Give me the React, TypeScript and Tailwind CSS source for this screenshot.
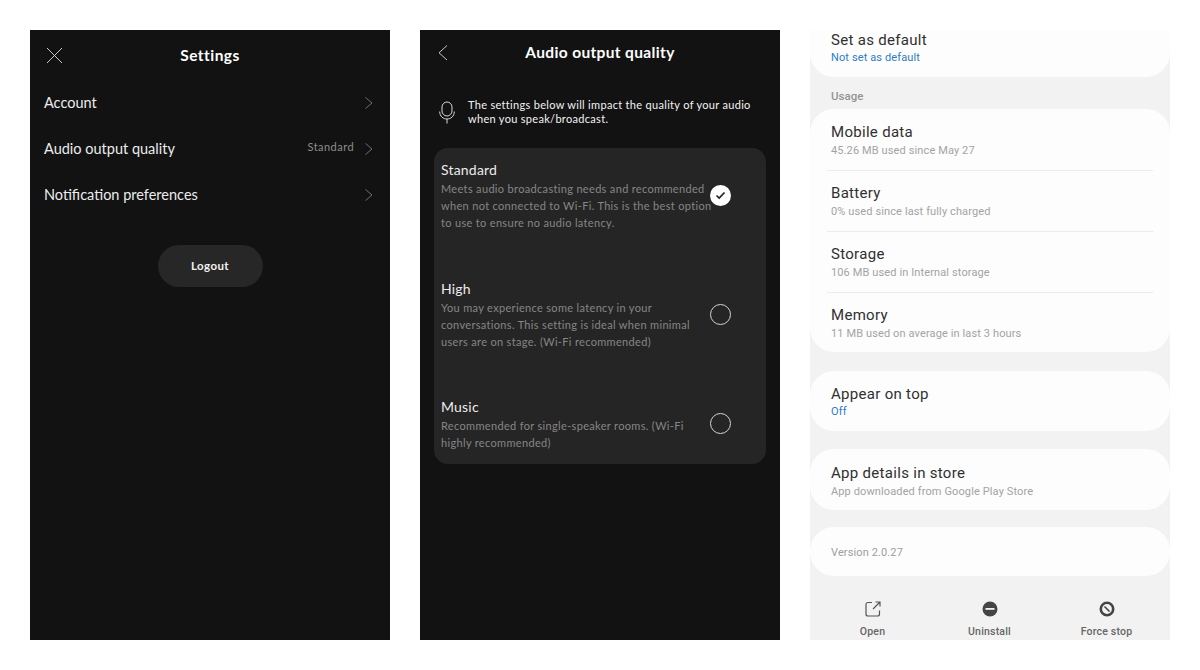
import React from "react";

const spot = "font-['Lato','Noto_Sans',sans-serif]";
const sam = "font-['Roboto','Noto_Sans',sans-serif]";

function Chevron() {
  return (
    <svg width="10" height="14" viewBox="0 0 10 14" fill="none" stroke="#6e6e6e" strokeWidth="1">
      <path d="M1.5 1.5 L8 7 L1.5 12.5" />
    </svg>
  );
}

function SettingsRow({ label, value }: { label: string; value?: string }) {
  return (
    <div className="flex h-[46px] items-center justify-between pl-[14px] pr-[16px]">
      <span className="text-[14.5px] tracking-[0px] text-[#ececec]">{label}</span>
      <div className="flex items-center gap-[10px]">
        {value && <span className="text-[11px] tracking-[0.45px] text-[#8e8e8e] -mt-[3px]">{value}</span>}
        <Chevron />
      </div>
    </div>
  );
}

function SettingsPanel() {
  return (
    <div className={`${spot} h-[610px] w-[360px] shrink-0 bg-[#121212]`}>
      <div className="relative flex h-[50px] items-center justify-center pt-[2px]">
        <svg className="absolute left-[16px] top-[17px]" width="17" height="17" viewBox="0 0 17 17" stroke="#dcdcdc" strokeWidth="0.9" fill="none">
          <path d="M1 1 L16 16 M16 1 L1 16" />
        </svg>
        <span className="text-[15.5px] font-bold tracking-[0.45px] text-white">Settings</span>
      </div>
      <SettingsRow label="Account" />
      <SettingsRow label="Audio output quality" value="Standard" />
      <SettingsRow label="Notification preferences" />
      <div className="mt-[27px] flex justify-center">
        <div className="flex h-[42px] w-[105px] items-center justify-center rounded-full bg-[#272727] text-[11.5px] font-bold tracking-[0.4px] text-[#f2f2f2]">
          Logout
        </div>
      </div>
    </div>
  );
}

function Option({ title, lines, checked, cls }: { title: string; lines: string[]; checked?: boolean; cls: string }) {
  return (
    <div className={`flex items-center ${cls}`}>
      <div className="w-[268px] shrink-0">
        <div className="text-[14px] leading-[18px] tracking-[0.2px] text-[#ececec]">{title}</div>
        <div className="mt-[1px] text-[11px] leading-[17px] tracking-[0.33px] text-[#858585] whitespace-nowrap">
          {lines.map((l) => (
            <div key={l}>{l}</div>
          ))}
        </div>
      </div>
      <div className="mb-[2px] flex h-[22px] w-[22px] items-center justify-center">
        {checked ? (
          <div className="flex h-[21px] w-[21px] items-center justify-center rounded-full bg-white">
            <svg width="11" height="9" viewBox="0 0 11 9" fill="none" stroke="#222" strokeWidth="1.7">
              <path d="M1.5 4.5 L4.2 7 L9.5 1.5" />
            </svg>
          </div>
        ) : (
          <div className="h-[21px] w-[21px] rounded-full border border-[#d4d4d4]" />
        )}
      </div>
    </div>
  );
}

function QualityPanel() {
  return (
    <div className={`${spot} h-[610px] w-[360px] shrink-0 bg-[#121212]`}>
      <div className="relative flex h-[46px] items-center justify-center">
        <svg className="absolute left-[17px] top-[14px]" width="12" height="18" viewBox="0 0 12 18" fill="none" stroke="#dcdcdc" strokeWidth="0.9">
          <path d="M10 1.5 L2 8.8 L10 16" />
        </svg>
        <span className="text-[15.5px] font-bold tracking-[0.35px] text-white">Audio output quality</span>
      </div>
      <div className="mt-[22px] flex items-center pl-[19px]">
        <svg width="16" height="23" viewBox="0 0 16 23" fill="none" stroke="#d8d8d8" strokeWidth="1">
          <rect x="3" y="1" width="10" height="14" rx="5" />
          <path d="M0.7 10.5 C0.7 20.5 15.3 20.5 15.3 10.5 M8 18 V22.5" />
        </svg>
        <div className="ml-[13px] text-[11px] leading-[14px] tracking-[0.31px] text-[#f2f2f2] whitespace-nowrap">
          <div>The settings below will impact the quality of your audio</div>
          <div>when you speak/broadcast.</div>
        </div>
      </div>
      <div className="mx-[14px] mt-[22px] h-[316px] rounded-[14px] bg-[#252525] px-[7px] pt-[14px]">
        <Option
          cls="h-[68px]"
          title="Standard"
          checked
          lines={[
            "Meets audio broadcasting needs and recommended",
            "when not connected to Wi-Fi. This is the best option",
            "to use to ensure no audio latency.",
          ]}
        />
        <Option
          cls="mt-[51px] h-[68px]"
          title="High"
          lines={[
            "You may experience some latency in your",
            "conversations. This setting is ideal when minimal",
            "users are on stage. (Wi-Fi recommended)",
          ]}
        />
        <Option
          cls="mt-[49px] h-[52px]"
          title="Music"
          lines={["Recommended for single-speaker rooms. (Wi-Fi", "highly recommended)"]}
        />
      </div>
    </div>
  );
}

function Item({ title, sub, blue, cls = "", wide }: { title: string; sub: string; blue?: boolean; cls?: string; wide?: boolean }) {
  return (
    <div className={`px-[21px] ${cls}`}>
      <div className="text-[15px] leading-[20px] tracking-[0.3px] text-[#303030]">{title}</div>
      <div
        className={`text-[11px] leading-[15px] tracking-[0.12px] ${wide ? "mt-[1px]" : ""} ${
          blue ? "text-[#2d7cc4]" : "text-[#a3a3a3]"
        }`}
      >
        {sub}
      </div>
    </div>
  );
}

function Divider() {
  return <div className="mx-[17px] mt-[12px] h-[1px] bg-[#ececec]" />;
}

function ActionBtn({ label, icon }: { label: string; icon: React.ReactNode }) {
  return (
    <div className="flex w-[117px] flex-col items-center">
      <div className="flex h-[18px] items-center justify-center">{icon}</div>
      <div className="mt-[7px] text-[10.5px] font-medium leading-[14px] tracking-[0.2px] text-[#666666]">{label}</div>
    </div>
  );
}

function AppInfoPanel() {
  return (
    <div className={`${sam} flex h-[610px] w-[360px] shrink-0 flex-col overflow-hidden bg-[#f2f2f2]`}>
      <div className="h-[47px] rounded-b-[24px] bg-[#fdfdfd]">
        <Item title="Set as default" sub="Not set as default" blue />
      </div>
      <div className="h-[32px] px-[21px] pt-[12px] text-[11.5px] font-medium leading-[15px] text-[#949494]">Usage</div>
      <div className="h-[243px] rounded-[24px] bg-[#fdfdfd] pt-[13px]">
        <Item wide title="Mobile data" sub="45.26 MB used since May 27" />
        <Divider />
        <Item wide cls="mt-[12px]" title="Battery" sub="0% used since last fully charged" />
        <Divider />
        <Item wide cls="mt-[12px]" title="Storage" sub="106 MB used in Internal storage" />
        <Divider />
        <Item wide cls="mt-[12px]" title="Memory" sub="11 MB used on average in last 3 hours" />
      </div>
      <div className="mt-[19px] h-[60px] rounded-[24px] bg-[#fdfdfd] pt-[13px]">
        <Item title="Appear on top" sub="Off" blue />
      </div>
      <div className="mt-[18px] h-[61px] rounded-[24px] bg-[#fdfdfd] pt-[14px]">
        <Item wide title="App details in store" sub="App downloaded from Google Play Store" />
      </div>
      <div className="mt-[17px] flex h-[49px] items-center rounded-[24px] bg-[#fdfdfd] px-[21px] pt-[3px] text-[11px] tracking-[0.12px] text-[#9e9e9e]">
        Version 2.0.27
      </div>
      <div className="mt-[24px] flex pl-[4px]">
        <ActionBtn
          label="Open"
          icon={
            <svg width="16" height="16" viewBox="0 0 16 16" fill="none" stroke="#555" strokeWidth="1.2">
              <path d="M7 1.5 H3 C1.8 1.5 1 2.3 1 3.5 V13 C1 14.2 1.8 15 3 15 H12.5 C13.7 15 14.5 14.2 14.5 13 V9.5" />
              <path d="M8 8 L15 1 M10.5 1 H15 V5.5" />
            </svg>
          }
        />
        <ActionBtn
          label="Uninstall"
          icon={
            <svg width="16" height="16" viewBox="0 0 16 16">
              <circle cx="8" cy="8" r="7.5" fill="#444" />
              <rect x="3.5" y="7" width="9" height="1.8" fill="#f2f2f2" />
            </svg>
          }
        />
        <ActionBtn
          label="Force stop"
          icon={
            <svg width="16" height="16" viewBox="0 0 16 16" fill="none">
              <circle cx="8" cy="8" r="6.2" stroke="#444" strokeWidth="2.6" />
              <path d="M5.5 5.5 L10.5 10.5" stroke="#444" strokeWidth="1.6" />
            </svg>
          }
        />
      </div>
    </div>
  );
}

export default function App() {
  return (
    <div className="flex h-[670px] w-[1200px] gap-[30px] overflow-hidden bg-white px-[30px] pt-[30px]">
      <SettingsPanel />
      <QualityPanel />
      <AppInfoPanel />
    </div>
  );
}
